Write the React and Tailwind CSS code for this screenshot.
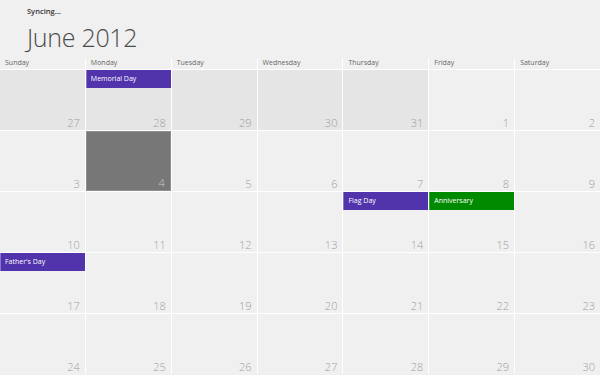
const days = ['Sunday', 'Monday', 'Tuesday', 'Wednesday', 'Thursday', 'Friday', 'Saturday'];

const weeks = [
  [27, 28, 29, 30, 31, 1, 2],
  [3, 4, 5, 6, 7, 8, 9],
  [10, 11, 12, 13, 14, 15, 16],
  [17, 18, 19, 20, 21, 22, 23],
  [24, 25, 26, 27, 28, 29, 30],
];

const events = {
  '0-1': { title: 'Memorial Day', color: 'purple' },
  '2-4': { title: 'Flag Day', color: 'purple' },
  '2-5': { title: 'Anniversary', color: 'green' },
  '3-0': { title: "Father's Day", color: 'purple' },
};

function DayCell({ day, week, col }) {
  const otherMonth = week === 0 && day > 20;
  const today = week === 1 && day === 4;
  const ev = events[`${week}-${col}`];

  return (
    <div
      className={`relative h-[60px] flex flex-col ${
        today ? 'bg-[#777777] border border-[#8e8e8e]' : otherMonth ? 'bg-[#e5e5e5]' : 'bg-[#f0f0f0]'
      }`}
    >
      {ev && (
        <div
          className={`h-[18px] flex items-center pl-[4px] text-[7px] text-white border-l ${
            ev.color === 'green' ? 'bg-[#008a00] border-[#3fa83f]' : 'bg-[#5133ab] border-[#8a76c8]'
          }`}
        >
          {ev.title}
        </div>
      )}
      <div
        className={`mt-auto text-right pr-[5px] pb-[2px] text-[11px] font-light leading-none ${
          today ? 'text-[#c8c8c8]' : 'text-[#a0a0a0]'
        }`}
      >
        {day}
      </div>
    </div>
  );
}

export default function App() {
  return (
    <div className="h-screen overflow-hidden bg-[#f0f0f0] font-['Open_Sans',sans-serif]">
      {/* Header */}
      <div className="pl-[27px] pt-[8px] h-[58px]">
        <p className="text-[7.5px] font-semibold text-[#333] leading-none">Syncing...</p>
        <h1 className="mt-[9px] text-[25px] font-light text-[#4a4a4a] leading-none tracking-[-0.3px]">June 2012</h1>
      </div>

      {/* Calendar grid */}
      <div className="grid grid-cols-7 gap-px bg-white">
        {days.map((d) => (
          <div key={d} className="h-[11px] bg-[#f0f0f0] pl-[5px] text-[7px] text-[#666] leading-[10px]">
            {d}
          </div>
        ))}
        {weeks.map((week, w) =>
          week.map((day, c) => <DayCell key={`${w}-${c}`} day={day} week={w} col={c} />)
        )}
      </div>
    </div>
  );
}
